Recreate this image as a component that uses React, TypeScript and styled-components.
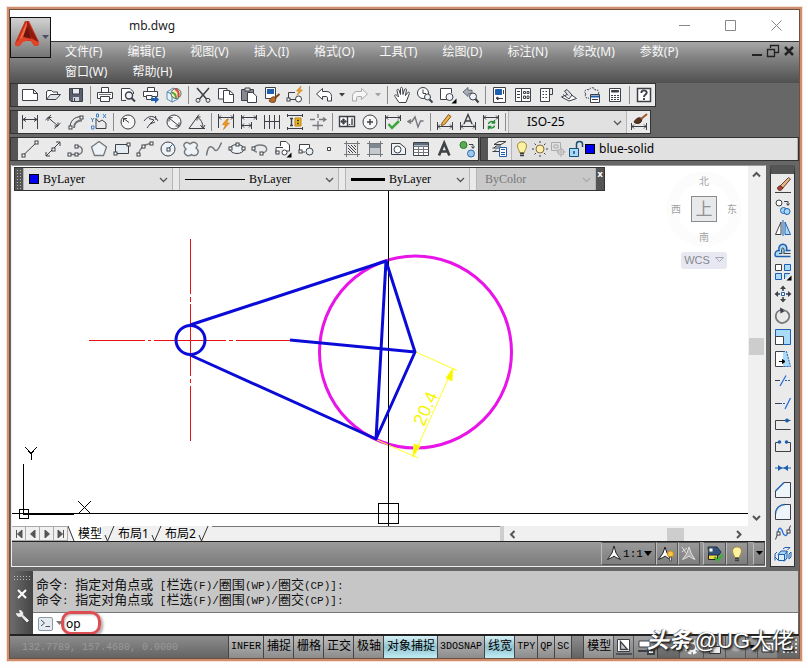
import React from "react";
import styled, { createGlobalStyle } from "styled-components";

const UI = `"Noto Sans", "Noto Sans CJK SC", sans-serif`;
const SONG = `"Liberation Serif", "Noto Sans CJK SC", serif`;
const MONO = `"Liberation Mono", "Noto Sans CJK SC", monospace`;

const INK = "#3d4047";
const SOFT = "#74777c";
const BLUE = "#1d5fae";
const SKY = "#a9daf8";
const GOLD = "#f0a01c";

const Global = createGlobalStyle`
  * { box-sizing: border-box; }
  body { margin: 0; background: #fefefe; }
  button, select, input { font: inherit; color: inherit; margin: 0; padding: 0; border: 0; background: none; }
`;

/* ---------- icons ---------- */

const endpoint = (x: number, y: number) => (
  <rect x={x - 1} y={y - 1} width="3" height="3" fill="#fff" stroke={INK} />
);

const glyphs: Record<string, React.ReactNode> = {
  new: <path d="M1.5 3.5H12.5L16.5 7.5V14.5H1.5ZM12.5 3.5V7.5H16.5" fill="#fff" />,
  open: <><path d="M2.5 13.5V5.5L4 4.5H7.5L9 6H13.5V8.5" fill="#fff" /><path d="M2.5 13.5L6.5 8.5H16.5L12 13.5Z" fill="#dfe3e8" /></>,
  save: <><path d="M2.5 2.5H15.5V15.5H4L2.5 14Z" fill="#5a6070" /><path d="M5.5 2.5H12.5V8H5.5Z" fill="#e8ebf0" /><path d="M6 11H12V15H6Z" fill="#cfd3da" stroke="none" /><path d="M7.5 12V15" /></>,
  print: <><path d="M5.5 6V1.5H12.5V6M1.5 6.5H16.5V12.5H1.5Z" fill="#fff" /><path d="M4.5 10.5H13.5V15.5H4.5Z" fill="#fff" /><path d="M3 8.5H15" stroke={SOFT} /></>,
  preview: <><path d="M2.5 14.5V2.5H11L14.5 6V8M2.5 14.5H7" fill="#fff" /><circle cx="10" cy="9.500" r="3.500" fill="#eef4fa" strokeWidth="1.400" /><path d="M12.500 12L16 15.500" strokeWidth="2" /></>,
  publish: <><path d="M5.500 5V1.500H12.500V5M1.500 5.500H15.500V10.500H1.500Z" fill="#fff" /><path d="M4.500 9.500H10V13.500H4.500Z" fill="#fff" /><path d="M9 12H13V9.500L17 13.500L13 17.500V15H9Z" fill={BLUE} stroke="none" /></>,
  globe: <><path d="M2 6L8 2L13 4V13L7 16L2 13Z" fill="#e9f3fb" stroke="#5b8fb0" /><path d="M2 6L7 8V16" stroke="#4d86a8" /><circle cx="11" cy="7.500" r="5" fill="#f3efbd" stroke="#50616c" /><path d="M7 6.500C9 7 11 9 11 12.400" stroke="#57a63a" strokeWidth="2" /><path d="M10 3C13 4 14 7 13.500 11" stroke="#d6493a" strokeWidth="2" /></>,
  cut: <><path d="M3 2L12.500 13M15 2L5.500 13" strokeWidth="1.500" /><circle cx="4" cy="14.300" r="2" /><circle cx="14" cy="14.300" r="2" /></>,
  copy: <><path d="M6.500 13H1.500V2.500H10V4" fill="#fff" /><path d="M6.500 4.500H12.500L16.500 8V16.500H6.500Z" fill="#fff" /><path d="M12.500 4.500V8.500H16.500" /></>,
  paste: <><path d="M1.500 3.500H13.500V14.500H1.500Z" fill="#85888e" /><path d="M5 2H10V5H5Z" fill="#ddd" /><path d="M7.500 6.500H12.500L16.500 10V16.500H7.500Z" fill="#fff" /></>,
  match: <><path d="M2.500 1.500H12.500V12.500H2.500Z" fill="#fff" /><path d="M4 3H11V8H4Z" fill={BLUE} stroke="none" /><path d="M8 12C10 10 12 11 13 12L12 16C9 17 7 16 6 15Z" fill="#b96a27" stroke="#79431b" /><path d="M12 12L16.500 8" stroke="#79431b" strokeWidth="2" /></>,
  block: <><path d="M9 6.500H2.500V13.500H10" /><circle cx="12.500" cy="13" r="3" fill="#fff" /><path d="M15 0L10.500 5H13L11 9.500L16.500 4H14Z" fill={GOLD} stroke="#b97410" strokeWidth="0.500" />{endpoint(2, 13)}</>,
  undo: <path d="M1.500 8L7.500 2.500V5.500H12C15 5.500 16.500 8 16.500 10.500V15H12.500V12C12.500 11 12 10.500 11 10.500H7.500V13.500Z" fill="#fff" />,
  redo: <path d="M16.500 8L10.500 2.500V5.500H6C3 5.500 1.500 8 1.500 10.500V15H5.500V12C5.500 11 6 10.500 7 10.500H10.500V13.500Z" fill="#f6f6f6" stroke="#a8aaad" />,
  down: <path d="M6 7H12L9 10.500Z" fill={INK} stroke="none" />,
  downoff: <path d="M6 7H12L9 10.500Z" fill="#a2a4a8" stroke="none" />,
  pan: <path d="M6 16.500L2 10.500C1 9 2.500 8 4 9.500L5.500 11L4 4.500C3.800 3 5.500 2.800 6 4.200L7.500 8.500V2.500C7.500 1 9.300 1 9.500 2.500L10 8.500L11.500 3.500C12 2.200 13.700 2.700 13.400 4L12.500 9.500L14.600 6.700C15.500 5.500 17 6.500 16.300 7.700L13 16.500Z" fill="#fff" />,
  zoomrt: <><circle cx="7" cy="7" r="5.500" fill="#fff" /><path d="M7 3.500V7.500H10" /><circle cx="11.500" cy="11" r="3" fill="#eef4fa" /><path d="M13.500 13.500L16.500 16.500" strokeWidth="2" /></>,
  zoomwin: <><path d="M8 13.500H1.500V2.500H12.500V7" fill="#fff" /><circle cx="10.500" cy="11" r="3.500" fill="#eef4fa" /><path d="M17.500 12.500V17.500H12.500Z" fill="#000" stroke="none" /></>,
  zoomprev: <><path d="M1 6L6 1.500V4.200H10V7.800H6V10.500Z" fill="#a9adb6" stroke="#666b78" /><circle cx="11" cy="10.500" r="3.500" fill="#eef4fa" /><path d="M13.500 13L16.500 16.500" strokeWidth="2" /></>,
  props: <><path d="M2.500 1.500H14.500V16.500H2.500Z" fill="#fff" /><path d="M4.500 3.500H10.500V8.500H4.500Z" fill={BLUE} stroke={BLUE} /><path d="M12.500 4V8M5 12.500H12M5 12L7 11V14Z" /></>,
  design: <><path d="M1.500 2.500H16.500V15.500H1.500Z" fill="#fff" /><path d="M7.500 3V15M3 5.500H6M3 8.500H6M3 11.500H6M9.500 5.500H11.500V7.500H9.500ZM13 5.500H15V7.500H13ZM9.500 10H11.500V12.500H9.500ZM13 10H15V12.500H13Z" /></>,
  palette: <><path d="M3.500 2.500H12.500V15.500H3.500Z" fill="#fff" /><path d="M12.500 2.500H15.500V8.500H13M5.500 5.500H7M8.500 5.500H10M5.500 8.500H7M8.500 8.500H10M5.500 11.500H7M8.500 11.500H10" /></>,
  sheet: <><path d="M1.500 11L9 15L16.500 12.500L9.500 7.500Z" fill="#fff" /><path d="M3 8.500L9 13M9 13L12 9L7 3.500L4.500 5L8 9.500" fill="#dfe2e6" /></>,
  markup: <><path d="M3 8C0 6 3 2 6 4C7 1 12 1 12 4C15 3 17 6 15 8M3 8C1 10 3 13 6 12" strokeDasharray="2 1" /><path d="M7.500 8.500H16.500V16.500H7.500Z" fill="#fff" /><path d="M8 10.500H16" stroke={BLUE} strokeWidth="2" /><path d="M9 13.500H15" /></>,
  calc: <><path d="M3.500 2.500H14.500V15.500H3.500Z" fill="#fff" /><path d="M5.500 4.500H12.500V6H5.500Z" fill={INK} /><path d="M5 9.500H13M5 11.500H13M5 13.500H13" strokeDasharray="2 1" /></>,
  help: <><path d="M2.500 2.500H15.500V15.500H2.500Z" fill="#fff" strokeWidth="1.500" /><path d="M6.300 7C6.300 3.500 11.700 3.700 11.700 6.700C11.700 8.700 9 8.500 9 11M9 12V14" strokeWidth="1.900" /></>,

  dimlin: <path d="M1.500 2V16M16.500 2V16M2 6.500H16M5 4.500L2 6.500L5 8.500M13 4.500L16 6.500L13 8.500" />,
  dimali: <path d="M1.500 7L7 2M10.500 15.500L16.500 10M4 4.500L14 13M4 8V4.500H7.500M14 9.500V13H10.500" />,
  dimarc: <><path d="M3 15C3 8 7 3.500 15 3.500" /><path d="M7 15C7 10 10 7.500 15 7.500" strokeWidth="2" stroke={SOFT} />{endpoint(3, 14)}{endpoint(14, 4)}</>,
  dimord: <><path d="M6 5.500V15.500H16V10L12 7L9 9L6 5.500" /><path d="M1 5L2.500 7L4 5M2.500 7V9M13 1L16 5M16 1L13 5M6.500 1H8.500V4H6.500ZM1.500 13H4V16H1.500Z" stroke="#3f83d0" /></>,
  dimrad: <><circle cx="9" cy="9" r="7" fill="#f7f7f7" /><path d="M4.500 5.500L10 9.500M8 5.500H4.500V9" /></>,
  dimjog: <path d="M2 8C6 2 13 2 16 8M7 5.500L12 7L8 11L13 9M13.500 3L14 7M8 11L5 15" />,
  dimdia: <><circle cx="9" cy="9" r="7" fill="#f7f7f7" /><path d="M4 5L14 13M7.500 4.500L4 5V8.500M14 9.500V13H10.500" /></>,
  dimang: <path d="M1 15.500H17M1 15.500L11 1.500M9 4C13 6 15 10 15 15M9 7.500V4H12.500M12.500 12L15 15.500L17 12" />,
  quick: <><path d="M1.500 1V15M16.500 1V15M2 4.500H16M4 2.500L2 4.500L4 6.500M14 2.500L16 4.500L14 6.500" /><path d="M10 6L5.500 11.500H8.500L6.500 16.500L12.500 10H9.500L11.500 6Z" fill={GOLD} stroke="#c9660d" strokeWidth="0.600" /></>,
  base: <path d="M1.500 2V16M16.500 2V7M11.500 9V16M2 4.500H16M2 12.500H11M4 2.500L2 4.500L4 6.500M14 2.500L16 4.500L14 6.500M4 10.500L2 12.500L4 14.500M9 10.500L11 12.500L9 14.500" />,
  cont: <path d="M1.500 2V16M6.500 2V16M11.500 2V16M16.500 2V16M2 8.500H16" />,
  space: <><path d="M1 2.500H17M1 15.500H17M1.500 1V4M1.500 14V17M16.500 1V4M16.500 14V17" /><path d="M9 5H15V13H9Z" fill="#f0b420" stroke="#b8860b" /><path d="M4 5.500H7M4 12.500H7M5.500 5.500V12.500M11 7.500H13M11 10.500H13" strokeWidth="1.400" /></>,
  dbreak: <path d="M1 6.500H6M10 6.500H17M9 1V5M9 8V17M3.500 12.500H14M14 4.500L17 6.500L14 8.500" stroke={SOFT} strokeWidth="1.300" />,
  tol: <><path d="M1.500 3.500H16.500V13.500H1.500Z" fill="#fff" strokeWidth="1.400" /><circle cx="5.500" cy="8.500" r="2" /><path d="M9.500 3.500V13.500M14 5.500V12M11.500 11V12M2.500 8.500H8.500M5.500 5.500V11.500" strokeWidth="1.400" /></>,
  center: <><circle cx="9" cy="9" r="7" fill="#f7f7f7" /><path d="M9 6V12M6 9H12" strokeWidth="1.400" /></>,
  inspect: <><path d="M1.500 2V16M16.500 2V8M2 4.500H16M4 2.500L2 4.500L4 6.500M14 2.500L16 4.500L14 6.500" /><path d="M4.500 11L8 15L15 8" stroke="#3ca83c" strokeWidth="2.500" /></>,
  jogl: <path d="M1 8.500H5L8 4L11 14L13.500 8H16.500M4 6.500L1 8.500L4 10.500" stroke={SOFT} strokeWidth="1.400" />,
  dedit: <><path d="M1.500 9V17M16.500 9V17M2 13.500H16M4 11.500L2 13.500L4 15.500M14 11.500L16 13.500L14 15.500" /><path d="M6 10L12.500 1.500L15 3.500L8.500 11.500L5.500 12.500Z" fill="#f0b24c" stroke="#875918" /></>,
  dtedit: <><path d="M1.500 9V17M16.500 9V17M2 13.500H16M4 11.500L2 13.500L4 15.500M14 11.500L16 13.500L14 15.500" /><path d="M5 11L9 1.500L13 11M6.500 8H11.500" strokeWidth="1.400" /></>,
  dupd: <><path d="M1.500 2V16M16.500 2V16M2 4.500H16M4 2.500L2 4.500L4 6.500M14 2.500L16 4.500L14 6.500" /><path d="M6.500 11C7 8.500 10 7.500 12 9.500M12.500 7V10H9.500M12.500 12.500C12 15 9 16 7 14M6.500 16.500V13.500H9.500" stroke="#238a35" strokeWidth="1.400" /></>,
  dstyle: <><path d="M1.500 10V17M16.500 10V17M2 13.500H16M4 11.500L2 13.500L4 15.500M14 11.500L16 13.500L14 15.500" /><path d="M4 9C7 4 10 4 12 6L11 9C9 11 6 11 4 9Z" fill="#5b3420" stroke="#3b2114" /><path d="M11 6L17 1" stroke="#a05a2a" strokeWidth="2" /></>,

  line: <><path d="M2 15.500L15.500 2.500" />{endpoint(2, 15)}{endpoint(15, 2)}</>,
  xline: <><path d="M2 16L16 2M2 12V16H6M12 2H16V6" />{endpoint(9, 9)}</>,
  pline: <><path d="M2 14.500H10C17 14.500 17 6 10 6H9" stroke={SOFT} strokeWidth="1.500" />{endpoint(2, 14)}{endpoint(9, 14)}{endpoint(9, 6)}</>,
  polygon: <path d="M9 1.500L16.500 7L13.500 15.500H4.500L1.500 7Z" fill="#eef3f8" stroke={SOFT} strokeWidth="1.300" />,
  rect: <><path d="M2.500 4.500H15.500V13.500H2.500Z" fill="#e3ecf3" />{endpoint(2, 13)}{endpoint(15, 4)}</>,
  arc: <><path d="M2 15C3 9 8 4 15 3.500" stroke={SOFT} strokeWidth="1.300" />{endpoint(2, 14)}{endpoint(7, 6)}{endpoint(15, 3)}</>,
  circle: <><circle cx="9" cy="9" r="7" fill="#eef3f8" /><path d="M9 9L13.500 4.500" stroke={BLUE} />{endpoint(9, 9)}</>,
  cloud: <path d="M4 9C-1 5 4 0 8 4C12 0 18 4 14 8C19 12 14 18 9.500 14.500C5 18 0 13 4 9Z" fill="#eef3f8" stroke={SOFT} strokeWidth="1.400" />,
  spline: <path d="M1.500 15.500C3 4 7 6 9 9C11 13 14 9 16.500 2.500" stroke={SOFT} strokeWidth="1.500" />,
  ellipse: <><ellipse cx="9" cy="9" rx="7" ry="4.500" fill="#eef3f8" />{endpoint(2, 8)}{endpoint(9, 4)}{endpoint(15, 8)}</>,
  ellarc: <><path d="M6 12C1 12 1 5 9 5C17 5 18 12 11 13" stroke={SOFT} strokeWidth="1.300" />{endpoint(2, 8)}{endpoint(10, 13)}</>,
  insert: <><path d="M6.500 6V1.500H12L15.500 5V11H12M2 13V7.500H9" fill="#fff" /><circle cx="10.500" cy="12.500" r="2.500" fill="#fff" />{endpoint(3, 12)}<path d="M17.500 12.500V17.500H12.500Z" fill="#000" stroke="none" /></>,
  mkblock: <><path d="M8 12H2.500V4.500H12.500V8" fill="#fff" /><circle cx="12.500" cy="11.500" r="3.500" fill="#e8f0f6" />{endpoint(3, 11)}</>,
  point: <path d="M7.500 7.500H10.500V10.500H7.500Z" fill="#fff" />,
  hatch: <><path d="M3.500 1V17M14.500 1V17M1 3.500H17M1 14.500H17" stroke={SOFT} /><path d="M5 5L13 13M8 5L13 10M11 5L13 7M5 8L10 13M5 11L7 13" /></>,
  grad: <><path d="M4 4H14V8H4Z" fill="#7f8890" stroke="none" /><path d="M4 8H14V14H4Z" fill="#c3c9ce" stroke="none" /><path d="M3.500 1V17M14.500 1V17M1 3.500H17M1 14.500H17" stroke={SOFT} /></>,
  region: <><path d="M2.500 3.500H11L16.500 8V14.500H2.500Z" fill="#eef3f8" /><circle cx="8.500" cy="9.500" r="3.500" fill="#fff" /></>,
  table: <><path d="M1.500 2.500H16.500V15.500H1.500Z" fill="#fff" /><path d="M2 3H16V5.500H2Z" fill="#5d6e80" stroke="none" /><path d="M1.500 6.500H16.500M1.500 9.500H16.500M1.500 12.500H16.500M6.500 6V15M11.500 6V15" stroke={SOFT} /></>,
  mtext: <path d="M4 15.500L9.200 3L14.400 15.500M5.500 11.500H13" stroke="#3f4347" strokeWidth="2.600" />,
  addsel: <><circle cx="5.500" cy="5" r="3.500" fill="#58ad52" stroke="#2c7528" /><circle cx="13" cy="13.500" r="3.500" fill="#9dc9f0" stroke="#2768a6" /><path d="M11 4.500H15V8M13.500 6.500L15 8.500L16.500 6.500" /></>,
  layers: <><path d="M3 4.500L8 1.500H15L10 4.500ZM1.500 8H8M1.500 11.500H8M3 8L5 6H10M3 11.500L5 9.500" /><path d="M8.500 7.500H15.500V16.500H8.500Z" fill="#fff" stroke={BLUE} /><path d="M10 9.500H14M10 12.500H14M10 14.500H14" stroke={BLUE} /></>,
  bulb: <><path d="M6.500 12.500C6.500 10 4.500 9 4.500 6C4.500 0.500 13.500 0.500 13.500 6C13.500 9 11.500 10 11.500 12.500Z" fill="#fdf2a4" stroke="#a58b34" /><path d="M7 13.500H11M7 15.500H11" strokeWidth="1.500" /></>,
  sun: <><circle cx="9" cy="9" r="4" fill="#fdeeb0" stroke="#857139" /><path d="M9 1V3M9 15V17M1 9H3M15 9H17M3.500 3.500L5 5M13 13L14.500 14.500M14.500 3.500L13 5M5 13L3.500 14.500" /></>,
  vpfreeze: <><path d="M2.500 2.500H11.500V10.500H2.500ZM5 5H9V8H5Z" stroke="#aaa" /><circle cx="12" cy="12" r="3" stroke="#aaa" fill="#ddd" /><path d="M12 7V17M7.500 12H16.500" stroke="#b5b5b5" /></>,
  lock: <><path d="M2.500 8.500H11.500V16.500H2.500Z" fill="#a9daf8" stroke="#175077" /><path d="M9.500 8V4C9.500 0.800 15.500 0.800 15.500 4V7M7 11V14" stroke="#175077" strokeWidth="1.500" /></>,

  erase: <><path d="M1 16.500H17" /><path d="M6 10L14.500 1.500L16.500 3L9 12Z" fill="#e5b183" stroke="#5e4636" /><path d="M3.500 12C5 9 7 9.500 9 12C7 15.500 4 15 3.500 12Z" fill="#a94432" stroke="#6c2418" /></>,
  dup: <><circle cx="5" cy="5" r="3" fill="#fff" /><path d="M10 3.500H14V7M12.500 5.500L14 7.500L15.500 5.500" /><circle cx="9.500" cy="12.500" r="3" fill={SKY} stroke={BLUE} /><circle cx="13" cy="13.500" r="3" fill={SKY} stroke={BLUE} /></>,
  mirror: <><path d="M7 3V15.500H1.500Z" fill="#fff" /><path d="M9 1V17" stroke={BLUE} /><path d="M11 3V15.500H16.500Z" fill={SKY} stroke={BLUE} /></>,
  offset: <><path d="M1.500 15.500H16.500M1.500 15.500C0 11 3 9 5 9.500C3.500 1 14.500 1 12.500 9.500H16.500" stroke={BLUE} strokeWidth="1.500" fill={SKY} /><path d="M5 12.500H8C6 5 11.500 5 9.800 12.500H16.500" /></>,
  array: <><path d="M1.500 1.500H7.500V7.500H1.500Z" fill="#fff" /><path d="M10.500 1.500H16.500V7.500H10.500ZM1.500 10.500H7.500V16.500H1.500ZM10.500 16V10.500H16" fill={SKY} stroke={BLUE} /><path d="M17.500 12.500V17.500H12.500Z" fill="#000" stroke="none" /></>,
  move: <><path d="M9 3V6M9 12V15M3 9H6M12 9H15" strokeWidth="1.500" /><path d="M6 4L9 .500L12 4ZM6 14L9 17.500L12 14ZM4 6L.500 9L4 12ZM14 6L17.500 9L14 12Z" fill={INK} stroke="none" /><path d="M7.500 7.500H10.500V10.500H7.500Z" fill="#fff" stroke={BLUE} /></>,
  rotate: <><path d="M7 3C1 4 0 12 5 15C11 18.500 18 11 14 5.500" stroke={SOFT} strokeWidth="1.700" /><path d="M6 .500L12 3.500L6.500 6.500Z" fill={INK} stroke="none" /><path d="M9 3.300C12 3.500 14 5 14.600 7" stroke={SOFT} strokeWidth="1.500" /></>,
  scale: <><path d="M1.500 1.500H16.500V16.500H1.500Z" fill={SKY} stroke={BLUE} /><path d="M1.500 8.500H9.500V16.500H1.500Z" fill="#fff" /></>,
  stretch: <><path d="M9.500 1.500H1.500V16.500H9.500" fill="#fff" /><path d="M9 1.500H12.500L16.500 16.500H9Z" fill={SKY} stroke="none" /><path d="M9 1.500H12.500L16.500 16.500H9" stroke={BLUE} strokeDasharray="2 1" /><path d="M5 11.500H10M8.500 9.500L11 11.500L8.500 13.500Z" fill="#000" stroke="#000" /></>,
  trim: <><path d="M1 8.500H6" /><path d="M6 14L12 3.500" stroke="#2b6ed8" strokeWidth="1.300" /><path d="M11 8.500H17" strokeDasharray="2 1" stroke={BLUE} /></>,
  extend: <><path d="M1 9.500H6" /><path d="M6 9.500H11" strokeDasharray="2 1" stroke={BLUE} /><path d="M11 15L16.500 4" stroke="#2b6ed8" strokeWidth="1.300" /></>,
  breakpt: <><path d="M16.500 5.500H1.500V14.500H16.500" /><circle cx="13" cy="5.500" r="2" fill={BLUE} stroke="none" /></>,
  brk: <><path d="M5.500 5.500H1.500V14.500H16.500V5.500H12.500" /><circle cx="5.500" cy="5" r="1.800" fill={BLUE} stroke="none" /><circle cx="12.500" cy="5" r="1.800" fill={BLUE} stroke="none" /></>,
  join: <><path d="M1 9H17" stroke={BLUE} /><path d="M4 6L8.500 9L4 12ZM14 6L9.500 9L14 12Z" fill={BLUE} stroke="none" /></>,
  chamfer: <><path d="M10 1.500H16.500V16.500H1.500V10" fill="#edf4fa" /><path d="M1.500 10L10 1.500" stroke={BLUE} strokeWidth="1.400" /></>,
  fillet: <><path d="M11 1.500H16.500V16.500H1.500V11" fill="#edf4fa" /><path d="M1.500 11C1.500 5 6 1.500 11 1.500" stroke={BLUE} strokeWidth="1.400" /></>,
  blend: <><path d="M1.500 15.500L4 9M14 8L16.500 1.500" /><path d="M4 8C5 1 8 5 9 9C10.500 13 13 12 14 8" stroke="#2b6ed8" strokeWidth="1.300" />{endpoint(4, 9)}{endpoint(14, 7)}</>,
  explode: <><path d="M4 8.500L7 5H13V12L10 15.500" fill={SKY} stroke={BLUE} /><path d="M4.500 8.500H10.500V14.500H4.500Z" fill="#d9effc" stroke={BLUE} /><path d="M10.500 8.500L13.500 5M1 11L4 14M1 14.500V8L3 6M9 3L11 1.500H16L13.500 4M15 8L17 6V11L15 13Z" stroke={BLUE} /></>,

  compass: <path d="M9 1L11 8L15.500 14.500L11 12.500L9 11L7 12.500L2.500 14.500L7 8Z" fill="#fff" stroke="#222" />,
  compassSun: <><path d="M7 2L9 8L13 14.500L9 12.500L7 11L5 12.500L.500 14.500L5 8Z" fill="#fff" stroke="#222" /><circle cx="12.500" cy="9" r="3" fill="#f9c64a" stroke="#d38c13" /><path d="M11.500 12H13.500V16H11.500Z" fill="#ddd" stroke="#555" /></>,
  compassOff: <path d="M9 2L11 8L15 14.500L11 12.500L9 11L7 12.500L2.500 14.500L7 8ZM2 2L6 8M2 7L7 3" stroke="#ddd" fill="#aaa" />,
  cloudCheck: <><path d="M2.500 8.500H11.500V14.500H2.500Z" fill="#f5d83e" stroke="#222" /><path d="M2 2H11L15 7L13 10H3Z" fill="#31507b" stroke="#1f2f46" /><path d="M3 3H7V7H3Z" fill="#fff" stroke="#456" /><path d="M8.500 12L11.500 15.500L17 9.500" stroke="#3bb031" strokeWidth="2.200" /></>,
  paper: <><path d="M2.500 1.500H14.500V13.500H2.500Z" fill="#fff" /><path d="M5.500 3.500V11.500H12.500ZM1 16H17" fill="#ccc" strokeWidth="1.400" /></>,
  quickview: <><path d="M2 3H13V9H2Z" fill="#fff" /><path d="M1 13H10M11 12H17V16H11Z" strokeWidth="2" fill="#fff" /></>,
  gear: <><circle cx="9" cy="9" r="5.500" fill="none" stroke="#f4f4f4" strokeWidth="4" strokeDasharray="3 1.500" /><circle cx="9" cy="9" r="4" fill="#666" stroke="#f4f4f4" strokeWidth="2" /></>,
  padlock: <><path d="M3.500 8.500H14.500V15.500H3.500Z" fill="#eee" stroke="#333" /><path d="M6 8V5C6 2 12 2 12 5V8M9 10V14" stroke="#eee" strokeWidth="2" /></>,
  hardware: <circle cx="9" cy="8" r="6" fill="#a8a8a8" stroke="#8b8b8b" />,
  clean: <path d="M3 4H15V14H3ZM6 7H12V11H6Z" fill="#f4f4f4" stroke="#222" />,
  grip: <path d="M15 3V5M11 7V9M15 7V9M7 11V13M11 11V13M15 11V13M3 15V17M7 15V17M11 15V17M15 15V17" stroke="#e4e4e4" strokeWidth="2" />,
};

const IconSvg = styled.svg`
  display: block;
  flex: none;
  width: 18px;
  height: 18px;
`;

const Icon = ({ name }: { name: string }) => (
  <IconSvg viewBox="0 0 18 18" fill="none" stroke={INK} aria-hidden="true">{glyphs[name]}</IconSvg>
);

const ChevronSvg = styled.svg`
  display: block;
  flex: none;
  width: 9px;
  height: 9px;
  pointer-events: none;
`;

const chevronPaths = { up: "M1 6.500L4.500 3L8 6.500", down: "M1 3L4.500 6.500L8 3", left: "M6.500 1L3 4.500L6.500 8", right: "M3 1L6.500 4.500L3 8" };
const Chevron = ({ to, heavy, tint = "#555" }: { to: keyof typeof chevronPaths; heavy?: boolean; tint?: string }) => (
  <ChevronSvg viewBox="0 0 9 9" fill="none" stroke={tint} strokeWidth={heavy ? 2 : 1.3} aria-hidden="true"><path d={chevronPaths[to]} /></ChevronSvg>
);

/* ---------- frame ---------- */

const Page = styled.div`
  min-height: 100vh;
  padding: 7px 6px 7px 7px;
  display: flex;
  font: 12px/16px ${UI};
  color: #111;
`;

const Frame = styled.div`
  flex: 1;
  min-width: 0;
  display: flex;
  flex-direction: column;
  border: 2px solid #cf8e6d;
  outline: 1px solid #f6e3d9;
  background: #676767;
  box-shadow: inset 0 0 0 1px #70513f;
  padding: 1px;
`;

const Head = styled.header`
  position: relative;
`;

const TitleBar = styled.div`
  height: 32px;
  display: flex;
  align-items: center;
  background: #fff;
  border-bottom: 1px solid #333;
  padding-left: 119px;
`;

const Title = styled.h1`
  flex: 1;
  margin: 0;
  font: 12px/16px ${UI};
  color: #222;
`;

const WindowButton = styled.button`
  width: 46px;
  height: 28px;
  display: grid;
  place-items: center;
`;

const AppButton = styled.button`
  position: absolute;
  left: 0;
  top: 7px;
  width: 41px;
  height: 41px;
  border: 1px solid #111;
  background: linear-gradient(#d2d2d2, #747474);
`;

const MenuBar = styled.div`
  display: flex;
  align-items: flex-start;
  height: 41px;
  background: linear-gradient(#a8a8a8, #858585 35%, #505050);
  padding-left: 55px;
`;

const Menus = styled.nav`
  flex: 1;
  display: flex;
  flex-wrap: wrap;
  column-gap: 25px;
  padding-right: 24px;
`;

const MenuItem = styled.button`
  height: 20px;
  color: #f8f8f8;
  font: 12px/20px ${UI};
  white-space: nowrap;
`;

const DocButtons = styled.div`
  display: flex;
  padding: 2px 2px 0 0;
`;

const DocButton = styled.button`
  width: 16px;
  height: 16px;
`;

/* ---------- toolbars ---------- */

const Toolbars = styled.div`
  display: flex;
  flex-direction: column;
  gap: 3px;
  padding-bottom: 4px;
`;

const ToolRow = styled.div`
  display: flex;
  gap: 1px;
`;

const Bar = styled.div<{ $grow?: boolean }>`
  display: flex;
  align-items: center;
  height: 24px;
  flex: ${(p) => (p.$grow ? "1" : "none")};
  border: 1px solid #333;
  border-left: 0;
  background: #eaeaea;
`;

const Grip = styled.span`
  align-self: stretch;
  width: 8px;
  flex: none;
  background: #555;
  border-left: 1px solid #333;
`;

const ToolButton = styled.button<{ $slim?: boolean }>`
  width: ${(p) => (p.$slim ? 13 : 23)}px;
  height: 22px;
  flex: none;
  display: flex;
  align-items: center;
  justify-content: center;
`;

const Divider = styled.span`
  width: 6px;
  height: 18px;
  flex: none;
  background: linear-gradient(#8c8c8c, #8c8c8c) 3px 0 / 1px 100% no-repeat;
`;

const Tools = ({ items }: { items: string }) => (
  <>
    {items.split(" ").map((n, i) =>
      n === "|" ? <Divider key={i} /> : (
        <ToolButton key={i} aria-label={n} $slim={n.startsWith("down")}><Icon name={n} /></ToolButton>
      )
    )}
  </>
);

const Combo = styled.label<{ $w?: number; $off?: boolean; $pad?: number }>`
  display: flex;
  align-items: center;
  align-self: stretch;
  flex: ${(p) => (p.$w ? `0 0 ${p.$w}px` : "1")};
  padding: 0 4px 0 ${(p) => p.$pad ?? 5}px;
  gap: 4px;
  background: ${(p) => (p.$off ? "#c9c9c9" : "#e1e1e1")};
  border-left: 1px solid #b5b5b5;
  border-right: 1px solid #b5b5b5;
  color: ${(p) => (p.$off ? "#777" : "#000")};
`;

const Select = styled.select<{ $song?: boolean }>`
  appearance: none;
  flex: 1;
  min-width: 0;
  opacity: 1;
  outline: 0;
  font: 12px/18px ${(p) => (p.$song ? SONG : UI)};
`;

const Swatch = styled.span`
  width: 10px;
  height: 10px;
  flex: none;
  background: #0000f0;
  border: 1px solid #000;
`;

const Sample = styled.span<{ $w: number; $h: number }>`
  width: ${(p) => p.$w}px;
  height: ${(p) => p.$h}px;
  flex: none;
  background: #000;
`;

const LayerState = styled.span`
  display: flex;
  margin-right: -4px;
`;

/* ---------- drawing area ---------- */

const Work = styled.main`
  flex: 1;
  display: flex;
  padding: 0 4px 4px 1px;
  gap: 4px;
`;

const Doc = styled.section`
  flex: 1;
  min-width: 0;
  display: flex;
  flex-direction: column;
  border: 1px solid #eee;
  border-top-color: #999;
`;

const ViewRow = styled.div`
  flex: 1;
  display: flex;
  background: #fff;
`;

const Canvas = styled.div`
  position: relative;
  flex: 1;
  min-width: 0;
  min-height: 354px;
  background: #fff;
`;

const Drawing = styled.svg`
  position: absolute;
  inset: 0;
  width: 100%;
  height: 100%;
`;

const Ucs = styled.svg`
  position: absolute;
  left: 0;
  bottom: 0;
  width: 90px;
  height: 90px;
`;

const Floating = styled.div`
  position: absolute;
  left: 2px;
  top: 1px;
  display: flex;
  width: 591px;
  height: 24px;
  gap: 6px;
  background: #eaeaea;
  border: 1px solid #333;
`;

const DotGrip = styled.span`
  width: 8px;
  margin-right: -6px;
  background: radial-gradient(#bbb 40%, transparent 45%) 1px 1px / 3px 3px #555;
`;

const CloseTab = styled.button`
  width: 8px;
  margin-left: -6px;
  background: #555;
  color: #fff;
  font: bold 9px/12px ${UI};
  display: flex;
  align-items: flex-start;
  justify-content: center;
`;

const Cube = styled.div`
  position: absolute;
  top: 1px;
  right: 2px;
  width: 84px;
  display: grid;
  grid-template-columns: repeat(3, 28px);
  grid-template-rows: repeat(3, 28px) 18px;
  place-items: center;
  color: #a2a2a2;
  font: 10px/12px ${UI};
  background: radial-gradient(circle at 42px 42px, transparent 26px, #fcfcfc 27px, #fcfcfc 37px, transparent 38px);
`;

const Facing = styled.button<{ $at: string }>`
  grid-area: ${(p) => p.$at};
`;

const TopFace = styled.button`
  grid-area: 2 / 2;
  width: 26px;
  height: 26px;
  border: 1px solid #8b8b8b;
  background: #e7e9eb;
  font: 17px/22px ${UI};
  color: #8e9298;
`;

const Wcs = styled.button`
  grid-area: 4 / 1 / 5 / 4;
  width: 46px;
  height: 17px;
  display: flex;
  align-items: center;
  justify-content: center;
  gap: 5px;
  border-radius: 3px;
  background: #e8e8f2;
  color: #858890;
  font: 11px/16px "Liberation Sans", sans-serif;
`;

const VScroll = styled.div`
  width: 17px;
  display: flex;
  flex-direction: column;
  align-items: center;
  justify-content: space-between;
  background: #f0f0f0;
`;

const ScrollButton = styled.button`
  width: 17px;
  height: 17px;
  display: grid;
  place-items: center;
`;

const Thumb = styled.span<{ $across?: boolean }>`
  width: ${(p) => (p.$across ? 17 : 15)}px;
  height: ${(p) => (p.$across ? 13 : 17)}px;
  background: #cdcdcd;
`;

const TabRow = styled.div`
  display: flex;
  height: 16px;
  background: #f0f0f0;
  border-bottom: 1px solid #222;
`;

const NavButton = styled.button`
  width: 14px;
  border: 1px solid #aaa;
  border-left: 0;
  display: grid;
  place-items: center;
`;

const Tab = styled.button<{ $on?: boolean }>`
  height: 15px;
  font: 12px/15px ${UI};
  background: ${(p) => (p.$on ? "#fff" : "#f0f0f0")};
  color: #000;
`;

const Slant = styled.svg`
  display: block;
  flex: none;
  height: 15px;
`;

const TabFill = styled.span`
  flex: 1;
  border-top: 1px solid #777;
`;

const HScroll = styled.div`
  width: 247px;
  flex: none;
  display: grid;
  grid-template-columns: 17px 1fr 17px 63px;
  align-items: center;
  border-left: 4px solid #cdcdcd;
`;

const WideEnd = styled.span`
  display: flex;
  justify-content: flex-end;
`;

const Corner = styled.span`
  width: 18px;
  flex: none;
`;

const ScaleBar = styled.div`
  height: 24px;
  display: flex;
  justify-content: flex-end;
  background: linear-gradient(#9a9a9a, #7b7b7b);
`;

const ScaleButton = styled.button<{ $w: number; $gap?: number }>`
  width: ${(p) => p.$w}px;
  margin-left: ${(p) => p.$gap ?? 0}px;
  height: 23px;
  display: flex;
  align-items: center;
  justify-content: center;
  border: 1px solid #555;
  border-left-color: #bbb;
  color: #000;
  font: 11px/16px ${MONO};
`;

const ModifyBar = styled.aside`
  width: 25px;
  flex: none;
  display: flex;
  flex-direction: column;
  border: 1px solid #333;
  border-top: 9px solid #555;
  background: #eaeaea;

  ${ToolButton} {
    flex: 1 1 20px;
    height: 20px;
  }
`;

/* ---------- command line and status ---------- */

const Command = styled.section`
  display: flex;
  margin: 0 1px;
  height: 63px;
`;

const CommandSide = styled.div`
  width: 22px;
  display: flex;
  flex-direction: column;
  align-items: center;
  background: linear-gradient(90deg, #6b6b6b, #454545);
`;

const SideDots = styled.span`
  width: 18px;
  height: 6px;
  margin: 4px 0 1px;
  background: radial-gradient(#bbb 40%, transparent 45%) 0 0 / 3px 3px;
`;

const SideButton = styled.button`
  width: 20px;
  height: 23px;
  display: grid;
  place-items: center;
`;

const CommandBody = styled.div`
  flex: 1;
  min-width: 0;
  display: flex;
  flex-direction: column;
  background: #c6c6c6;
`;

const History = styled.div`
  flex: 1;
  padding: 8px 3px 0;
`;

const HistoryLine = styled.p`
  margin: 0;
  height: 15px;
  font: 11px/15px ${MONO};
  white-space: pre;
  color: #111;
`;

const Han = styled.span`
  font-size: 13px;
  line-height: 12px;
`;

const Prompt = styled.label`
  position: relative;
  height: 22px;
  display: flex;
  align-items: center;
  padding-left: 5px;
  gap: 3px;
  background: #fff;
  border-top: 1px solid #777;
`;

const PromptBox = styled.span`
  width: 15px;
  height: 14px;
  border: 1px solid #8d98a6;
  border-radius: 2px;
  background: #e6ebf1;
  display: grid;
  place-items: center;
`;

const PromptInput = styled.input`
  flex: 1;
  height: 20px;
  outline: 0;
  color: #000;
  font: 12px/20px ${UI};
`;

const Highlight = styled.span`
  position: absolute;
  left: 28px;
  top: -2px;
  width: 40px;
  height: 24px;
  border: 3px solid #dd4d52;
  border-radius: 10px;
  box-shadow: 2px 2px 3px #aaa, inset 1px 1px 2px #bbb;
  pointer-events: none;
`;

const Status = styled.footer`
  position: relative;
  height: 24px;
  display: flex;
  border-top: 2px solid #222;
  background: linear-gradient(#8d8d8d, #636363);
`;

const Coordinates = styled.output`
  flex: 0 0 218px;
  padding-left: 12px;
  font: 10px/23px ${MONO};
  color: #999;
`;

const Toggle = styled.button<{ $on?: boolean; $han?: boolean }>`
  flex: none;
  padding: 0 2px 0 ${(p) => (p.$han ? 3 : 2)}px;
  border-left: 1px solid #444;
  background: ${(p) => (p.$on ? "linear-gradient(#d8f1f7, #8fc3d0 50%, #c2edf5)" : "linear-gradient(#bdbdbd, #8c8c8c)")};
  color: #000;
  font: ${(p) => (p.$han ? "12px/20px" : "10px/20px")} ${MONO};
`;

const StatusGap = styled.span<{ $w: number }>`
  width: ${(p) => p.$w}px;
  flex: none;
  border-left: 1px solid #444;
`;

const StatusIcon = styled.button<{ $w: number }>`
  width: ${(p) => p.$w}px;
  flex: none;
  display: grid;
  place-items: center;
  border-left: 1px solid #555;
  background: linear-gradient(#a5a5a5, #7e7e7e);
`;

const CornerGrip = styled.span`
  margin-left: auto;
`;

const Watermark = styled.div`
  position: absolute;
  right: 5px;
  bottom: 3px;
  color: #fff;
  font: 22px/28px "Liberation Sans", "Noto Sans CJK SC", sans-serif;
  text-shadow: 1px 1px 1px #222, 2px 2px 2px #333, -1px 0 1px #555;
  white-space: nowrap;
`;

const Brand = styled.b`
  font-style: italic;
  margin-right: 4px;
`;

const menus = ["文件(F)", "编辑(E)", "视图(V)", "插入(I)", "格式(O)", "工具(T)", "绘图(D)", "标注(N)", "修改(M)", "参数(P)", "窗口(W)", "帮助(H)"];
const history = "命令: 指定对角点或 [栏选(F)/圈围(WP)/圈交(CP)]:";
const modify = "erase dup mirror offset array move rotate scale stretch trim extend breakpt brk join chamfer fillet blend explode";
const toggles: [string, boolean?][] = [["INFER"], ["捕捉"], ["栅格"], ["正交"], ["极轴"], ["对象捕捉", true], ["3DOSNAP"], ["线宽", true], ["TPY"], ["QP"], ["SC"]];
const isHan = (s: string) => /[\u4e00-\u9fff]/.test(s);

const HistoryText = ({ text }: { text: string }) => (
  <HistoryLine>{text.split(/([\u4e00-\u9fff]+)/).map((s, i) => (isHan(s) ? <Han key={i}>{s}</Han> : s))}</HistoryLine>
);

const Slash = () => (
  <Slant width="16" viewBox="0 0 16 15" fill="none" stroke="#333"><path d="M5.500 15L12 0M5.500 15L3 9" /></Slant>
);

/* The drawing keeps its own sheet coordinates; the group shifts them onto the canvas. */
const Model = () => (
  <Drawing>
    <g transform="translate(-12 -166)" fill="none">
      <g stroke="#e81010" strokeWidth="1" shapeRendering="crispEdges">
        <path d="M89 340.500H145M148 340.500H151M154 340.500H226M229 340.500H233M236 340.500H290" />
        <path d="M190.500 239V294M190.500 297V302M190.500 304V376M190.500 379V383M190.500 386V441" />
      </g>
      <circle cx="415.500" cy="352" r="96" stroke="#e815e8" strokeWidth="3" />
      <g stroke="#ffff20" fill="#f5f500">
        <path d="M416 352L457 370.500M377 440L418 458M452 370L414 455" />
        <path d="M453 368L452 381L446 378ZM413 457L414 444L420 446Z" />
        <text x="0" y="0" transform="translate(424 427) rotate(-66)" stroke="none" fontFamily="Liberation Sans, sans-serif" fontSize="18">20.4</text>
      </g>
      <path d="M388.500 191V526M12 513.500H2400" stroke="#000" shapeRendering="crispEdges" />
      <path d="M378.500 503.500H398.500V523.500H378.500Z" stroke="#000" shapeRendering="crispEdges" />
      <g stroke="#0b0bd8" strokeWidth="3">
        <circle cx="190.500" cy="340" r="14.500" />
        <path d="M190 325L386 261L415 352L376 439L190 355M386 261L376 439M290 340L415 352" strokeLinejoin="round" />
      </g>
    </g>
  </Drawing>
);

export default function App() {
  return (
    <Page>
      <Global />
      <Frame>
        <Head>
          <TitleBar>
            <Title>mb.dwg</Title>
            <WindowButton aria-label="Minimize"><svg width="11" height="11" stroke="#888" fill="none"><path d="M0 5.500H11" /></svg></WindowButton>
            <WindowButton aria-label="Maximize"><svg width="11" height="11" stroke="#888" fill="none"><path d="M.500 .500H10.500V10.500H.500Z" /></svg></WindowButton>
            <WindowButton aria-label="Close"><svg width="11" height="11" stroke="#888" fill="none"><path d="M.500 .500L10.500 10.500M10.500 .500L.500 10.500" /></svg></WindowButton>
          </TitleBar>
          <MenuBar>
            <Menus>{menus.map((m) => <MenuItem key={m}>{m}</MenuItem>)}</Menus>
            <DocButtons>
              <DocButton aria-label="Minimize drawing"><svg width="12" height="14"><path d="M1 10H11V12H1Z" fill="#222" /></svg></DocButton>
              <DocButton aria-label="Restore drawing"><svg width="14" height="14" fill="none" stroke="#222" strokeWidth="1.300"><path d="M4.500 4V1.500H12.500V8.500H9M1.500 5.500H8.500V12.500H1.500Z" /></svg></DocButton>
              <DocButton aria-label="Close drawing"><svg width="12" height="14" stroke="#222" strokeWidth="2.500"><path d="M2 3L10 11M10 3L2 11" /></svg></DocButton>
            </DocButtons>
          </MenuBar>
          <AppButton aria-label="Application menu">
            <svg width="39" height="39" viewBox="0 0 39 39">
              <path d="M14 3H18L28 24C29 29 23 29 22 26L20 23H12L10 26C9 29 3 29 4 25Z" fill="#c62f1b" />
              <path d="M16 3L28 25L17 17Z" fill="#8e1b10" />
              <path d="M16 3L8 22L15 18Z" fill="#ef6a3e" />
              <path d="M16 8L12 19L20 21Z" fill="#6f130c" />
              <path d="M4 25L12 19L20 21L28 24C29 29 23 29 22 26L19 22L12 24L10 26C9 29 3 29 4 25Z" fill="#e0452a" />
              <path d="M31 17H38L34.500 21Z" fill="#4a5068" />
            </svg>
          </AppButton>
        </Head>

        <Toolbars>
          <ToolRow>
            <Bar><Grip /><Tools items="new open save | print preview publish globe | cut copy paste match block | undo down redo downoff | pan zoomrt zoomwin zoomprev | props design palette sheet markup calc | help" /></Bar>
          </ToolRow>
          <ToolRow>
            <Bar>
              <Grip /><Tools items="dimlin dimali dimarc dimord | dimrad dimjog dimdia dimang | quick base cont space dbreak | tol center inspect jogl | dedit dtedit dupd |" />
              <Combo $w={119} $pad={18}>
                <Select aria-label="Dimension style"><option>ISO-25</option></Select>
                <Chevron to="down" />
              </Combo>
              <Tools items="dstyle" />
            </Bar>
          </ToolRow>
          <ToolRow>
            <Bar><Grip /><Tools items="line xline pline polygon rect arc circle cloud spline ellipse ellarc insert mkblock point hatch grad region table mtext addsel" /></Bar>
            <Bar $grow>
              <Grip /><Tools items="layers" />
              <Combo $pad={1}>
                <LayerState><Icon name="bulb" /><Icon name="sun" /><Icon name="vpfreeze" /><Icon name="lock" /></LayerState>
                <Swatch />
                <Select aria-label="Layer"><option>blue-solid</option></Select>
              </Combo>
            </Bar>
          </ToolRow>
        </Toolbars>

        <Work>
          <Doc>
            <ViewRow>
              <Canvas>
                <Model />
                <Ucs fill="none" stroke="#000" shapeRendering="crispEdges">
                  <path d="M11.500 28V74M16 78.500H62" />
                  <path d="M7.500 73.500H16.500V82.500H7.500ZM11.500 74V78.500H16" />
                  <path d="M13 11L19 17.500L25 11M19.500 17V24M66 65L79 78M79 65L66 78" />
                </Ucs>
                <Floating>
                  <DotGrip />
                  <Combo $w={150}><Swatch /><Select $song aria-label="Color"><option>ByLayer</option></Select><Chevron to="down" /></Combo>
                  <Combo $w={160}><Sample $w={60} $h={1} /><Select $song aria-label="Linetype"><option>ByLayer</option></Select><Chevron to="down" /></Combo>
                  <Combo $w={125}><Sample $w={34} $h={3} /><Select $song aria-label="Lineweight"><option>ByLayer</option></Select><Chevron to="down" /></Combo>
                  <Combo $off $pad={8}><Select $song disabled aria-label="Plot style"><option>ByColor</option></Select><Chevron to="down" tint="#aaa" /></Combo>
                  <CloseTab aria-label="Close toolbar">x</CloseTab>
                </Floating>
                <Cube>
                  <Facing $at="1 / 2">北</Facing>
                  <Facing $at="2 / 1">西</Facing>
                  <TopFace>上</TopFace>
                  <Facing $at="2 / 3">东</Facing>
                  <Facing $at="3 / 2">南</Facing>
                  <Wcs>WCS<svg width="9" height="6" fill="none" stroke="#a5a7b2"><path d="M.500 .500H8.500L4.500 4.500Z" /></svg></Wcs>
                </Cube>
              </Canvas>
              <VScroll>
                <ScrollButton aria-label="Scroll up"><Chevron to="up" heavy /></ScrollButton>
                <Thumb />
                <ScrollButton aria-label="Scroll down"><Chevron to="down" heavy /></ScrollButton>
              </VScroll>
            </ViewRow>
            <TabRow>
              {["M2.500 0V8M8 0V8L3.500 4Z", "M7 0V8L2.500 4Z", "M3 0V8L7.500 4Z", "M7.500 0V8M2 0V8L6.500 4Z"].map((d, i) => (
                <NavButton key={i} aria-label={["First layout", "Previous layout", "Next layout", "Last layout"][i]}>
                  <svg width="10" height="8" fill="#555" stroke="#555" strokeWidth="1"><path d={d} /></svg>
                </NavButton>
              ))}
              <Slant width="10" viewBox="0 0 10 15"><path d="M0 0H10V15H6Z" fill="#fff" /><path d="M0 0L6 15" stroke="#333" /></Slant>
              <Tab $on>模型</Tab><Slash /><Tab>布局1</Tab><Slash /><Tab>布局2</Tab><Slash />
              <TabFill />
              <HScroll>
                <ScrollButton aria-label="Scroll left"><Chevron to="left" heavy /></ScrollButton>
                <span />
                <Thumb $across />
                <WideEnd><ScrollButton aria-label="Scroll right"><Chevron to="right" heavy /></ScrollButton></WideEnd>
              </HScroll>
              <Corner />
            </TabRow>
            <ScaleBar>
              <ScaleButton $w={55}><Icon name="compass" />1:1<svg width="9" height="6"><path d="M1 0H9L5 5Z" /></svg></ScaleButton>
              <ScaleButton $w={22} aria-label="Annotation visibility"><Icon name="compassSun" /></ScaleButton>
              <ScaleButton $w={22} aria-label="Annotation autoscale"><Icon name="compassOff" /></ScaleButton>
              <ScaleButton $w={23} $gap={3} aria-label="Drawing status"><Icon name="cloudCheck" /></ScaleButton>
              <ScaleButton $w={22} aria-label="Isolate objects"><Icon name="bulb" /></ScaleButton>
              <ScaleButton $w={12} $gap={5} aria-label="Status bar menu"><svg width="7" height="5"><path d="M0 0H7L3.500 4Z" /></svg></ScaleButton>
            </ScaleBar>
          </Doc>
          <ModifyBar><Tools items={modify} /></ModifyBar>
        </Work>

        <Command>
          <CommandSide>
            <SideDots />
            <SideButton aria-label="Close command line"><svg width="10" height="10" stroke="#fff" strokeWidth="2"><path d="M1 1L9 9M9 1L1 9" /></svg></SideButton>
            <SideButton aria-label="Customize"><svg width="15" height="15" viewBox="0 0 15 15" fill="none" stroke="#eee"><path d="M1.500 4.500C2 8 5 8 6.500 7L12 13L13.500 11.500L7.500 6C8.500 3 6.500 1.500 4.500 1.500L5.500 4L4 5Z" fill="#eee" /></svg></SideButton>
          </CommandSide>
          <CommandBody>
            <History><HistoryText text={history} /><HistoryText text={history} /></History>
            <Prompt>
              <PromptBox><svg width="11" height="9" fill="none" stroke="#45505e"><path d="M1 1L4.500 4L1 7M5.500 7.500H10" /></svg></PromptBox>
              <svg width="7" height="5"><path d="M0 0H7L3.500 4Z" fill="#777" /></svg>
              <PromptInput aria-label="Command" defaultValue="op" />
              <Highlight />
            </Prompt>
          </CommandBody>
        </Command>

        <Status>
          <Coordinates>132.7789, 157.4680, 0.0000</Coordinates>
          {toggles.map(([t, on]) => <Toggle key={t} $on={on} $han={isHan(t)}>{t}</Toggle>)}
          <StatusGap $w={12} />
          <Toggle $han>模型</Toggle>
          <StatusIcon $w={20} aria-label="Layout"><Icon name="paper" /></StatusIcon>
          <StatusIcon $w={24} aria-label="Quick view"><Icon name="quickview" /></StatusIcon>
          <StatusGap $w={22} />
          <StatusIcon $w={24} aria-label="Workspace"><Icon name="gear" /></StatusIcon>
          <StatusIcon $w={22} aria-label="Lock toolbars"><Icon name="padlock" /></StatusIcon>
          <StatusIcon $w={20} aria-label="Hardware"><Icon name="hardware" /></StatusIcon>
          <StatusIcon $w={12} aria-label="Tray menu"><svg width="7" height="5"><path d="M0 0H7L3.500 4Z" /></svg></StatusIcon>
          <StatusIcon $w={20} aria-label="Clean screen"><Icon name="clean" /></StatusIcon>
          <CornerGrip><Icon name="grip" /></CornerGrip>
          <Watermark><Brand>头条</Brand>@UG大佬</Watermark>
        </Status>
      </Frame>
    </Page>
  );
}
